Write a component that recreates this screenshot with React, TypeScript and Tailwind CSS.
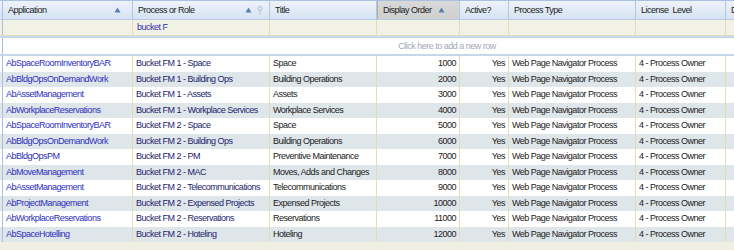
import React from "react";

const cols = [
  { key: "app", label: "Application", w: 130 },
  { key: "proc", label: "Process or Role", w: 137 },
  { key: "title", label: "Title", w: 107 },
  { key: "order", label: "Display Order", w: 83 },
  { key: "active", label: "Active?", w: 49 },
  { key: "type", label: "Process Type", w: 127 },
  { key: "lic", label: "License  Level", w: 90 },
  { key: "d", label: "D", w: 40 },
];

const rows = [
  ["AbSpaceRoomInventoryBAR", "Bucket FM 1 - Space", "Space", "1000"],
  ["AbBldgOpsOnDemandWork", "Bucket FM 1 - Building Ops", "Building Operations", "2000"],
  ["AbAssetManagement", "Bucket FM 1 - Assets", "Assets", "3000"],
  ["AbWorkplaceReservations", "Bucket FM 1 - Workplace Services", "Workplace Services", "4000"],
  ["AbSpaceRoomInventoryBAR", "Bucket FM 2 - Space", "Space", "5000"],
  ["AbBldgOpsOnDemandWork", "Bucket FM 2 - Building Ops", "Building Operations", "6000"],
  ["AbBldgOpsPM", "Bucket FM 2 - PM", "Preventive Maintenance", "7000"],
  ["AbMoveManagement", "Bucket FM 2 - MAC", "Moves, Adds and Changes", "8000"],
  ["AbAssetManagement", "Bucket FM 2 - Telecommunications", "Telecommunications", "9000"],
  ["AbProjectManagement", "Bucket FM 2 - Expensed Projects", "Expensed Projects", "10000"],
  ["AbWorkplaceReservations", "Bucket FM 2 - Reservations", "Reservations", "11000"],
  ["AbSpaceHotelling", "Bucket FM 2 - Hoteling", "Hoteling", "12000"],
];

const Tri = () => (
  <svg width="7" height="6" viewBox="0 0 7 6" className="shrink-0">
    <path d="M3.5 0.5 L6.5 5.5 L0.5 5.5 Z" fill="#5a7db0" />
  </svg>
);

const Pin = () => (
  <svg width="6" height="9" viewBox="0 0 6 9" className="shrink-0">
    <circle cx="3" cy="2.5" r="2" fill="none" stroke="#a9b9cc" strokeWidth="1" />
    <path d="M3 4.5 L3 8.5" stroke="#a9b9cc" strokeWidth="1" />
  </svg>
);

const cell = "shrink-0 flex items-center px-[3px] border-r border-[#e4dcb3] whitespace-nowrap overflow-hidden";

export default function App() {
  const font = { fontFamily: "'Liberation Sans', Arial, sans-serif" };
  return (
    <div className="w-[734px] h-[250px] overflow-hidden bg-[#f0efe4] text-[9px] tracking-[-0.5px] leading-none" style={font}>
      <div className="w-[900px]">
        {/* header */}
        <div className="flex h-[20px] border-t border-t-[#a8c1e0] bg-gradient-to-b from-[#eef3fa] to-[#d6e3f3] border-b border-b-[#b7cbe4]">
          <div className="w-[3px] shrink-0 border-r border-[#a8c1e0]" />
          {cols.map((c) => (
            <div
              key={c.key}
              style={{ width: c.w }}
              className={`shrink-0 flex items-center px-[5px] border-r border-[#b2c6df] text-[#1a1a1a] overflow-hidden ${
                c.key === "order" ? "bg-gradient-to-b from-[#d9d9d9] to-[#cfcfcf] border-l border-l-[#b0b0b0]" : ""
              }`}
            >
              <span className="flex-1 whitespace-pre">{c.label}</span>
              {c.key === "app" && <span className="mr-[6px]"><Tri /></span>}
              {c.key === "proc" && (
                <span className="flex items-center gap-[5px] mr-[1px]"><Tri /><Pin /></span>
              )}
              {c.key === "order" && <span className="mr-[9px]"><Tri /></span>}
            </div>
          ))}
        </div>
        {/* filter row */}
        <div className="flex h-[16px] bg-[#f2f1e5] border-b border-[#e3dcb8]">
          <div className="w-[3px] shrink-0 border-r border-[#a8c1e0]" />
          {cols.map((c) => (
            <div
              key={c.key}
              style={{ width: c.w }}
              className="shrink-0 flex items-center px-[4px] border-r border-[#e4dcb3] text-[#3030b0]"
            >
              {c.key === "proc" ? "bucket F" : ""}
            </div>
          ))}
        </div>
        {/* separator */}
        <div className="h-[2px] bg-[#c6d6ec]" />
        {/* add new row */}
        <div className="flex h-[18px] bg-white border-b-2 border-[#c6d6ec]">
          <div className="w-[3px] shrink-0 border-r border-[#a8c1e0]" />
          <div className="w-[888px] flex items-center justify-center text-[#a3a9b4]">Click here to add a new row</div>
        </div>
        {/* data rows */}
        {rows.map((r, i) => (
          <div key={i} className={`flex h-[15.5px] ${i % 2 === 1 ? "bg-[#dfe6ea]" : "bg-white"}`}>
            <div className="w-[3px] shrink-0 border-r border-[#a8c1e0]" />
            <div style={{ width: 130 }} className={`${cell} text-[#2d2dc0]`}>{r[0]}</div>
            <div style={{ width: 137 }} className={`${cell} text-[#1c1c6c]`}>{r[1]}</div>
            <div style={{ width: 107 }} className={`${cell} text-[#1a1a1a]`}>{r[2]}</div>
            <div style={{ width: 83 }} className={`${cell} justify-end text-[#1a1a1a]`}>{r[3]}</div>
            <div style={{ width: 49 }} className={`${cell} justify-end text-[#1a1a1a]`}>Yes</div>
            <div style={{ width: 127 }} className={`${cell} text-[#1a1a1a]`}>Web Page Navigator Process</div>
            <div style={{ width: 90 }} className={`${cell} text-[#1a1a1a]`}>4 - Process Owner</div>
            <div style={{ width: 40 }} className="shrink-0 border-r border-[#e4dcb3]" />
          </div>
        ))}
      </div>
    </div>
  );
}
